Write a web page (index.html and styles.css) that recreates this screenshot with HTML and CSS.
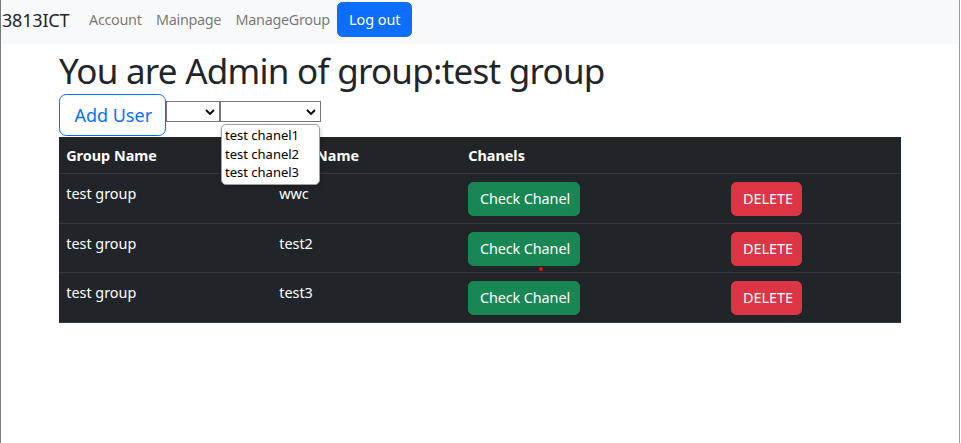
FILE: index.html
```html
<!DOCTYPE html>
<html lang="en">
<head>
<meta charset="utf-8">
<title>Manage Group</title>
<link rel="stylesheet" href="styles.css">
</head>
<body>
<div class="window">
  <nav class="navbar">
    <a class="brand" href="#">3813ICT</a>
    <ul class="nav">
      <li><a class="nav-link" href="#">Account</a></li>
      <li><a class="nav-link" href="#">Mainpage</a></li>
      <li><a class="nav-link" href="#">ManageGroup</a></li>
    </ul>
    <button class="btn btn-primary">Log out</button>
  </nav>
  <main class="container">
    <h1 class="title">You are Admin of group:test group</h1>
    <div class="toolbar">
      <button class="btn btn-outline-primary btn-lg">Add User</button>
      <span class="select select-user">
        <select aria-label="User"></select>
        <svg class="chev" viewBox="0 0 10 6" width="10" height="6"><path d="M1 1l4 4 4-4" fill="none" stroke="#000" stroke-width="1.8"/></svg>
      </span>
      <span class="select select-chanel">
        <select aria-label="Chanel">
          <option></option>
          <option>test chanel1</option>
          <option>test chanel2</option>
          <option>test chanel3</option>
        </select>
        <svg class="chev" viewBox="0 0 10 6" width="10" height="6"><path d="M1 1l4 4 4-4" fill="none" stroke="#000" stroke-width="1.8"/></svg>
        <ul class="dropdown">
          <li>test chanel1</li>
          <li>test chanel2</li>
          <li>test chanel3</li>
        </ul>
      </span>
    </div>
    <table class="table">
      <colgroup>
        <col class="c1"><col class="c2"><col class="c3"><col class="c4">
      </colgroup>
      <thead>
        <tr><th>Group Name</th><th>User Name</th><th>Chanels</th><th></th></tr>
      </thead>
      <tbody>
        <tr><td>test group</td><td>wwc</td><td><button class="btn btn-success">Check Chanel</button></td><td><button class="btn btn-danger">DELETE</button></td></tr>
        <tr><td>test group</td><td>test2</td><td><button class="btn btn-success">Check Chanel</button></td><td><button class="btn btn-danger">DELETE</button></td></tr>
        <tr><td>test group</td><td>test3</td><td><button class="btn btn-success">Check Chanel</button></td><td><button class="btn btn-danger">DELETE</button></td></tr>
      </tbody>
    </table>
    <span class="cursor-dot"></span>
  </main>
</div>
</body>
</html>
```

FILE: styles.css
```css
* { box-sizing: border-box; }

body {
  margin: 0;
  font-family: "Noto Sans", "Open Sans", sans-serif;
  font-size: 14.4px;
  line-height: 1.5;
  color: #212529;
  background: #fff;
}

.window {
  width: 960px;
  height: 443px;
  border-left: 1px solid #7c7c7c;
  border-right: 1px solid #9c9c9c;
  overflow: hidden;
}

/* navbar */
.navbar {
  display: flex;
  align-items: center;
  height: 44px;
  padding: 0 0 5px 0;
  background: #f8f9fa;
}

.brand {
  display: block;
  width: 80.8px;
  padding-left: 1px;
  font-size: 18px;
  letter-spacing: -0.2px;
  color: #212529;
  text-decoration: none;
  line-height: 1.5;
  margin-top: 2px;
}

.nav {
  display: flex;
  list-style: none;
  margin: 0;
  padding: 0;
}

.nav-link {
  display: block;
  padding: 0 7.2px;
  color: rgba(0, 0, 0, 0.55);
  text-decoration: none;
  font-size: 14.4px;
  letter-spacing: -0.3px;
  margin-top: 1px;
}

/* buttons */
.btn {
  display: inline-block;
  font-family: inherit;
  font-size: 14.4px;
  line-height: 1.5;
  padding: 5.4px 10.8px;
  border: 0.9px solid transparent;
  border-radius: 5.4px;
  cursor: pointer;
  white-space: nowrap;
}

.btn-primary {
  background: #0d6efd;
  border-color: #0d6efd;
  color: #fff;
  height: 35px;
  padding-top: 0;
  padding-bottom: 0;
  width: 75px;
}

.btn-outline-primary {
  background: #fff;
  border-color: #0d6efd;
  color: #0d6efd;
}

.btn-lg {
  font-size: 18px;
  padding: 7.2px 14.4px;
  border-radius: 7.2px;
  height: 42px;
  width: 107px;
}

.btn-success {
  background: #198754;
  border-color: #198754;
  color: #fff;
  height: 34px;
  width: 112px;
  padding-top: 0;
  padding-bottom: 0;
  letter-spacing: -0.1px;
  margin-top: -1px;
}

.btn-danger {
  background: #dc3545;
  border-color: #dc3545;
  color: #fff;
  height: 34px;
  width: 71px;
  padding-top: 0;
  padding-bottom: 0;
  margin-top: -1px;
}

/* main */
.container {
  position: relative;
  width: 900px;
  padding-left: 58px;
}

.title {
  font-size: 35px;
  letter-spacing: -0.75px;
  font-weight: 400;
  line-height: 1.2;
  margin: 6px 0 2px;
  white-space: nowrap;
}

.toolbar {
  display: flex;
  align-items: flex-start;
}

.select {
  position: relative;
  display: block;
  margin-top: 7px;
  height: 21px;
}

.select select {
  appearance: none;
  -webkit-appearance: none;
  display: block;
  height: 21px;
  border: 1px solid #767676;
  border-radius: 0;
  background: #fff;
  font-family: inherit;
  font-size: 13px;
  margin: 0;
  padding: 0 2px;
}

.select-user select { width: 54px; }
.select-chanel select { width: 101px; }

.chev {
  position: absolute;
  right: 5px;
  top: 8px;
  pointer-events: none;
}

.dropdown {
  position: absolute;
  top: 23px;
  left: 1px;
  width: 99px;
  margin: 0;
  padding: 1px 0 2px 3px;
  list-style: none;
  background: #fff;
  border: 1px solid #a0a0a0;
  border-radius: 5px;
  box-shadow: 0 2px 4px rgba(0, 0, 0, 0.25);
  font-size: 13px;
  line-height: 18.5px;
  color: #000;
  z-index: 2;
}

/* table */
.table {
  width: 842px;
  margin-top: 1px;
  border-collapse: collapse;
  table-layout: fixed;
  background: #212529;
  color: #fff;
}

.c1 { width: 213px; }
.c2 { width: 189px; }
.c3 { width: 263px; }
.c4 { width: 177px; }

.table th,
.table td {
  text-align: left;
  vertical-align: top;
  padding: 7.2px;
  border-bottom: 1px solid #373b3e;
  font-size: 14.4px;
}

.table th {
  font-weight: 700;
  height: 36px;
  padding-top: 8px;
  padding-bottom: 6.4px;
}

.table td {
  height: 49.6px;
  padding-top: 9px;
  padding-bottom: 5.4px;
}

.cursor-dot {
  position: absolute;
  left: 538px;
  top: 217px;
  width: 4px;
  height: 4px;
  border-radius: 50%;
  background: #e01010;
}
```
